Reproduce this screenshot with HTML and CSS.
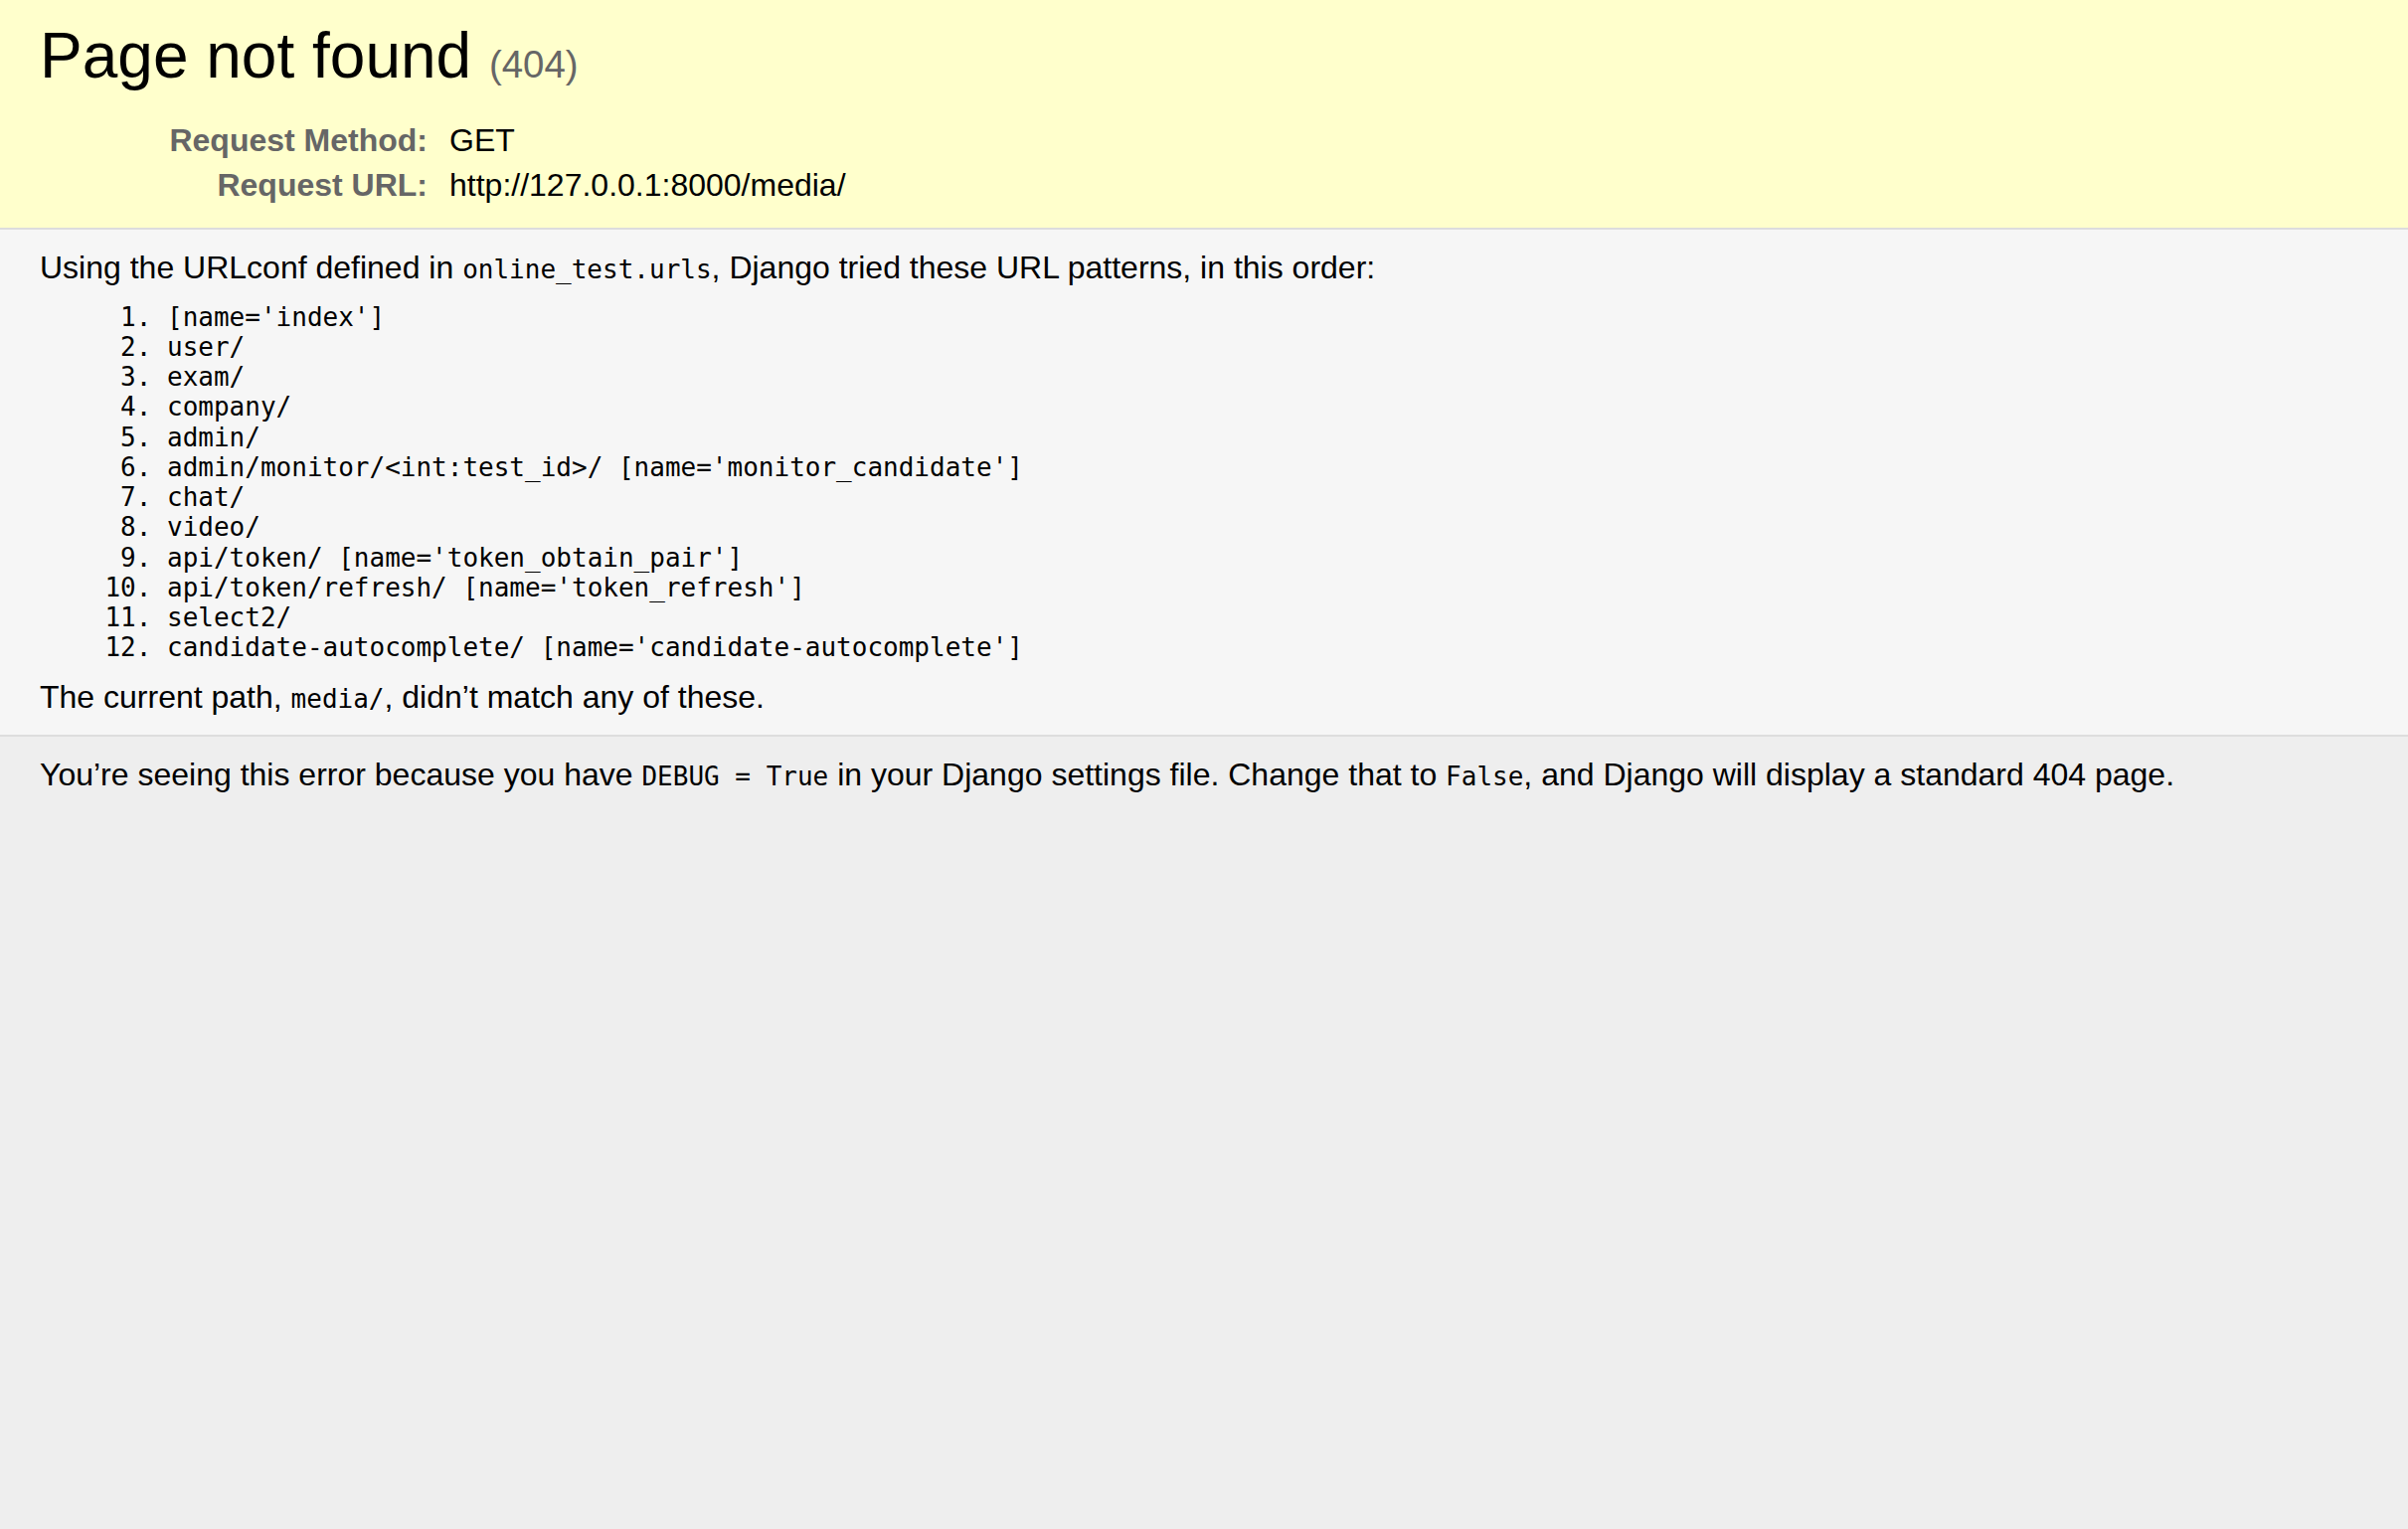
FILE: index.html
```html
<!DOCTYPE html>
<html lang="en">
<head>
<meta charset="utf-8">
<title>Page not found at /media/</title>
<link rel="stylesheet" href="styles.css">
</head>
<body>
<header id="summary">
  <h1>Page not found <small>(404)</small></h1>
  <table class="meta">
    <tr><th>Request Method:</th><td>GET</td></tr>
    <tr><th>Request URL:</th><td>http://127.0.0.1:8000/media/</td></tr>
  </table>
</header>
<main id="info">
  <p>Using the URLconf defined in <code>online_test.urls</code>, Django tried these URL patterns, in this order:</p>
  <ol>
    <li>[name='index']</li>
    <li>user/</li>
    <li>exam/</li>
    <li>company/</li>
    <li>admin/</li>
    <li>admin/monitor/&lt;int:test_id&gt;/ [name='monitor_candidate']</li>
    <li>chat/</li>
    <li>video/</li>
    <li>api/token/ [name='token_obtain_pair']</li>
    <li>api/token/refresh/ [name='token_refresh']</li>
    <li>select2/</li>
    <li>candidate-autocomplete/ [name='candidate-autocomplete']</li>
  </ol>
  <p>The current path, <code>media/</code>, didn’t match any of these.</p>
</main>
<footer id="explanation">
  <p>You’re seeing this error because you have <code>DEBUG = True</code> in your Django settings file. Change that to <code>False</code>, and Django will display a standard 404 page.</p>
</footer>
</body>
</html>
```
FILE: styles.css
```css
html * { padding: 0; margin: 0; }
body * { padding: 20px 40px; }
body * * { padding: 0; }
body {
  font-family: "Liberation Sans", Arial, sans-serif;
  font-size: 32px;
  line-height: 1.15;
  background: #eee;
  color: #000;
  min-height: 100vh;
}
header, main { border-bottom: 2px solid #ddd; }
h1 { font-size: 64px; font-weight: normal; margin-bottom: 0.4em; }
h1 small { font-size: 60%; color: #666; font-weight: normal; }
table { border: none; border-collapse: collapse; width: 100%; }
td, th { vertical-align: top; padding: 4px 6px; text-align: left; }
th { width: 384px; text-align: right; color: #666; padding-right: 16px; font-weight: bold; }
#info { background: #f6f6f6; }
#info ol { margin: 16px 128px; }
#info ol li { font-family: "DejaVu Sans Mono", monospace; font-size: 26px; line-height: 1.164; }
code { font-family: "DejaVu Sans Mono", monospace; font-size: 26px; }
#summary { background: #ffc; }
#explanation { background: #eee; border-bottom: 0 none; }
```
